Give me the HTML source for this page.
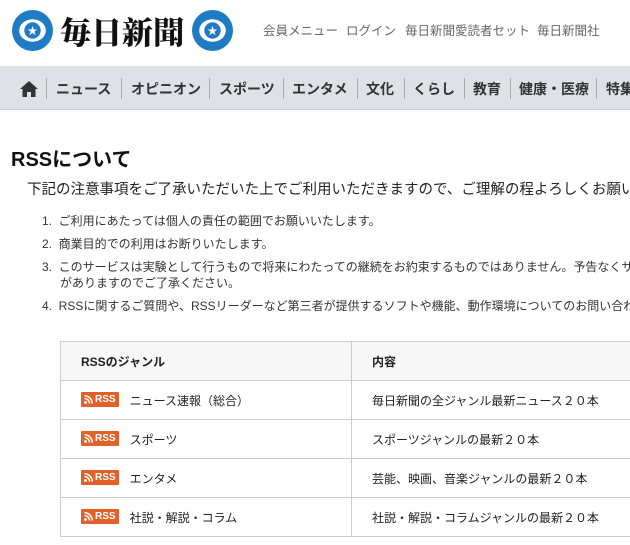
<!DOCTYPE html><html><head><meta charset="utf-8"><style>
html,body{margin:0;width:630px;height:545px;overflow:hidden}
body{background:#fff;font-family:"Liberation Sans","Noto Sans CJK JP",sans-serif;color:#222}
#w{position:relative;width:630px;height:545px;overflow:hidden}
.a{position:absolute;white-space:nowrap}
.logo{font-family:"Noto Serif CJK SC","Noto Sans CJK JP",serif;font-weight:900;font-size:31px;color:#111}
.hl{font-size:12.5px;color:#666}
.nav{position:absolute;left:0;top:66px;width:630px;height:43px;background:#dee1e5;border-bottom:1px solid #ccd;overflow:hidden}
.ni{position:absolute;top:13px;font-size:14px;font-weight:bold;color:#333;white-space:nowrap}
.sep{position:absolute;top:12px;width:1px;height:21px;background:#aaa}
.li{font-size:12px;color:#333}
.tb{position:absolute;left:60px;top:341px;width:570px;overflow:hidden;height:200px}
table{border-collapse:collapse;width:600px;font-size:12px}
td{border:1px solid #ccc;height:38px;padding:0 0 0 20px;white-space:nowrap}
tr:first-child td{background:#f7f7f7;font-weight:bold}
.rss{display:inline-flex;align-items:center;background:#e0622a;color:#fff;font-size:10px;font-weight:bold;padding:1px 3px 1px 3px;margin-right:11px;border-radius:1px;vertical-align:1px;height:13px}
.rss svg{margin-right:2px}
</style></head><body><div id="w">
<svg class="a" style="left:12px;top:10px" width="41" height="41" viewBox="0 0 40 40"><circle cx="20" cy="20" r="20" fill="#1f7cc4"/><ellipse cx="20" cy="20" rx="13" ry="11" fill="#fff"/><circle cx="20" cy="20" r="8" fill="#1f7cc4"/><text x="20" y="24" font-size="10" fill="#fff" text-anchor="middle">★</text></svg>
<div class="a logo" style="left:60px;top:8px">毎日新聞</div>
<svg class="a" style="left:192px;top:10px" width="41" height="41" viewBox="0 0 40 40"><circle cx="20" cy="20" r="20" fill="#1f7cc4"/><ellipse cx="20" cy="20" rx="13" ry="11" fill="#fff"/><circle cx="20" cy="20" r="8" fill="#1f7cc4"/><text x="20" y="24" font-size="10" fill="#fff" text-anchor="middle">★</text></svg>
<div class="a hl" style="left:263px;top:20px">会員メニュー</div>
<div class="a hl" style="left:346px;top:20px">ログイン</div>
<div class="a hl" style="left:405px;top:20px">毎日新聞愛読者セット</div>
<div class="a hl" style="left:537px;top:20px">毎日新聞社</div>
<div class="nav">
<svg class="a" style="left:20px;top:15px" width="18" height="16" viewBox="0 0 18 16"><path d="M9 0L0 8h2.5v8h4.5v-5h4v5h4.5V8H18z" fill="#333"/></svg>
<div class="sep" style="left:46px"></div><div class="ni" style="left:56px">ニュース</div>
<div class="sep" style="left:121px"></div><div class="ni" style="left:131px">オピニオン</div>
<div class="sep" style="left:209px"></div><div class="ni" style="left:219px">スポーツ</div>
<div class="sep" style="left:283px"></div><div class="ni" style="left:292px">エンタメ</div>
<div class="sep" style="left:357px"></div><div class="ni" style="left:366px">文化</div>
<div class="sep" style="left:404px"></div><div class="ni" style="left:413px">くらし</div>
<div class="sep" style="left:464px"></div><div class="ni" style="left:473px">教育</div>
<div class="sep" style="left:510px"></div><div class="ni" style="left:519px">健康・医療</div>
<div class="sep" style="left:596px"></div><div class="ni" style="left:606px">特集</div>
</div>
<div class="a" style="left:11px;top:143px;font-size:20px;font-weight:bold;color:#111">RSSについて</div>
<div class="a" style="left:27px;top:178px;font-size:14.5px;color:#222">下記の注意事項をご了承いただいた上でご利用いただきますので、ご理解の程よろしくお願いいたします。</div>
<div class="a li" style="left:42px;top:212px">1.&nbsp;&nbsp;ご利用にあたっては個人の責任の範囲でお願いいたします。</div>
<div class="a li" style="left:42px;top:235px">2.&nbsp;&nbsp;商業目的での利用はお断りいたします。</div>
<div class="a li" style="left:42px;top:258px">3.&nbsp;&nbsp;このサービスは実験として行うもので将来にわたっての継続をお約束するものではありません。予告なくサービスを</div>
<div class="a li" style="left:60px;top:274px">がありますのでご了承ください。</div>
<div class="a li" style="left:42px;top:297px">4.&nbsp;&nbsp;RSSに関するご質問や、RSSリーダーなど第三者が提供するソフトや機能、動作環境についてのお問い合わせには</div>
<div class="tb"><table>
<tr><td style="width:270px">RSSのジャンル</td><td>内容</td></tr>
<tr><td><span class="rss"><svg width="9" height="9" viewBox="0 0 9 9"><circle cx="1.5" cy="7.5" r="1.4" fill="#fff"/><path d="M0.5 3.5a5 5 0 0 1 5 5M0.5 0.8a7.7 7.7 0 0 1 7.7 7.7" stroke="#fff" stroke-width="1.5" fill="none"/></svg>RSS</span>ニュース速報（総合）</td><td>毎日新聞の全ジャンル最新ニュース２０本</td></tr>
<tr><td><span class="rss"><svg width="9" height="9" viewBox="0 0 9 9"><circle cx="1.5" cy="7.5" r="1.4" fill="#fff"/><path d="M0.5 3.5a5 5 0 0 1 5 5M0.5 0.8a7.7 7.7 0 0 1 7.7 7.7" stroke="#fff" stroke-width="1.5" fill="none"/></svg>RSS</span>スポーツ</td><td>スポーツジャンルの最新２０本</td></tr>
<tr><td><span class="rss"><svg width="9" height="9" viewBox="0 0 9 9"><circle cx="1.5" cy="7.5" r="1.4" fill="#fff"/><path d="M0.5 3.5a5 5 0 0 1 5 5M0.5 0.8a7.7 7.7 0 0 1 7.7 7.7" stroke="#fff" stroke-width="1.5" fill="none"/></svg>RSS</span>エンタメ</td><td>芸能、映画、音楽ジャンルの最新２０本</td></tr>
<tr><td><span class="rss"><svg width="9" height="9" viewBox="0 0 9 9"><circle cx="1.5" cy="7.5" r="1.4" fill="#fff"/><path d="M0.5 3.5a5 5 0 0 1 5 5M0.5 0.8a7.7 7.7 0 0 1 7.7 7.7" stroke="#fff" stroke-width="1.5" fill="none"/></svg>RSS</span>社説・解説・コラム</td><td>社説・解説・コラムジャンルの最新２０本</td></tr>
</table></div>
</div></body></html>
